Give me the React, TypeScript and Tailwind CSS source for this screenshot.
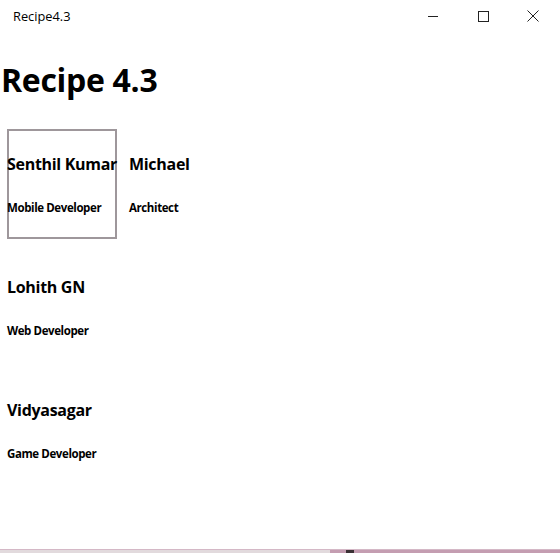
import React from "react";

const people = [
  { name: "Senthil Kumar", role: "Mobile Developer", selected: true },
  { name: "Lohith GN", role: "Web Developer" },
  { name: "Vidyasagar", role: "Game Developer" },
  { name: "Michael", role: "Architect" },
];

export default function App() {
  return (
    <div
      className="w-[560px] h-[553px] bg-white flex flex-col overflow-hidden text-black"
      style={{ fontFamily: '"Open Sans", "Noto Sans", sans-serif' }}
    >
      <div className="h-[32px] flex items-center shrink-0">
        <div className="pl-[13px] text-[12.8px] flex-1 leading-none">Recipe4.3</div>
        <div className="flex items-center h-full pr-[2px]">
          <div className="w-[50px] h-full flex items-center justify-center">
            <svg width="10" height="10" viewBox="0 0 10 10">
              <path d="M0 5.5H10" stroke="#222" strokeWidth="1" />
            </svg>
          </div>
          <div className="w-[50px] h-full flex items-center justify-center">
            <svg width="11" height="11" viewBox="0 0 11 11">
              <rect x="0.5" y="0.5" width="10" height="10" fill="none" stroke="#222" strokeWidth="1" />
            </svg>
          </div>
          <div className="w-[50px] h-full flex items-center justify-center">
            <svg width="12" height="12" viewBox="0 0 12 12">
              <path d="M0.5 0.5L11.5 11.5M11.5 0.5L0.5 11.5" stroke="#222" strokeWidth="1" />
            </svg>
          </div>
        </div>
      </div>
      <div className="flex-1 flex flex-col">
        <h1 className="pl-[1px] mt-[28px] text-[32px] font-bold leading-[40px] tracking-[-0.3px]">Recipe 4.3</h1>
        <div className="mt-[29px] ml-[7px] grid grid-flow-col grid-rows-[110px_110px_110px] auto-cols-[110px] gap-x-[12px] gap-y-[13px] w-max">
          {people.map((p) => (
            <div
              key={p.name}
              className={
                "relative w-[110px] h-[110px] " +
                (p.selected ? "border-2 border-[#9e979b]" : "border-2 border-transparent")
              }
            >
              <div className="absolute left-[-2px] top-[22px] text-[16px] font-bold whitespace-nowrap leading-[22px] tracking-[-0.3px]">
                {p.name}
              </div>
              <div className="absolute left-[-2px] top-[69px] text-[11.5px] font-bold whitespace-nowrap leading-[16px] tracking-[-0.4px]">
                {p.role}
              </div>
            </div>
          ))}
        </div>
      </div>
      <div className="h-[4px] shrink-0 flex flex-col">
        <div className="h-[1px] bg-[#d4b8c6]"></div>
        <div className="flex-1 flex">
          <div className="w-[330px] bg-[#e2dadd]"></div>
          <div className="flex-1 bg-[#c49db1] flex">
            <div className="ml-[16px] w-[8px] bg-[#3a3034]"></div>
          </div>
        </div>
      </div>
    </div>
  );
}
